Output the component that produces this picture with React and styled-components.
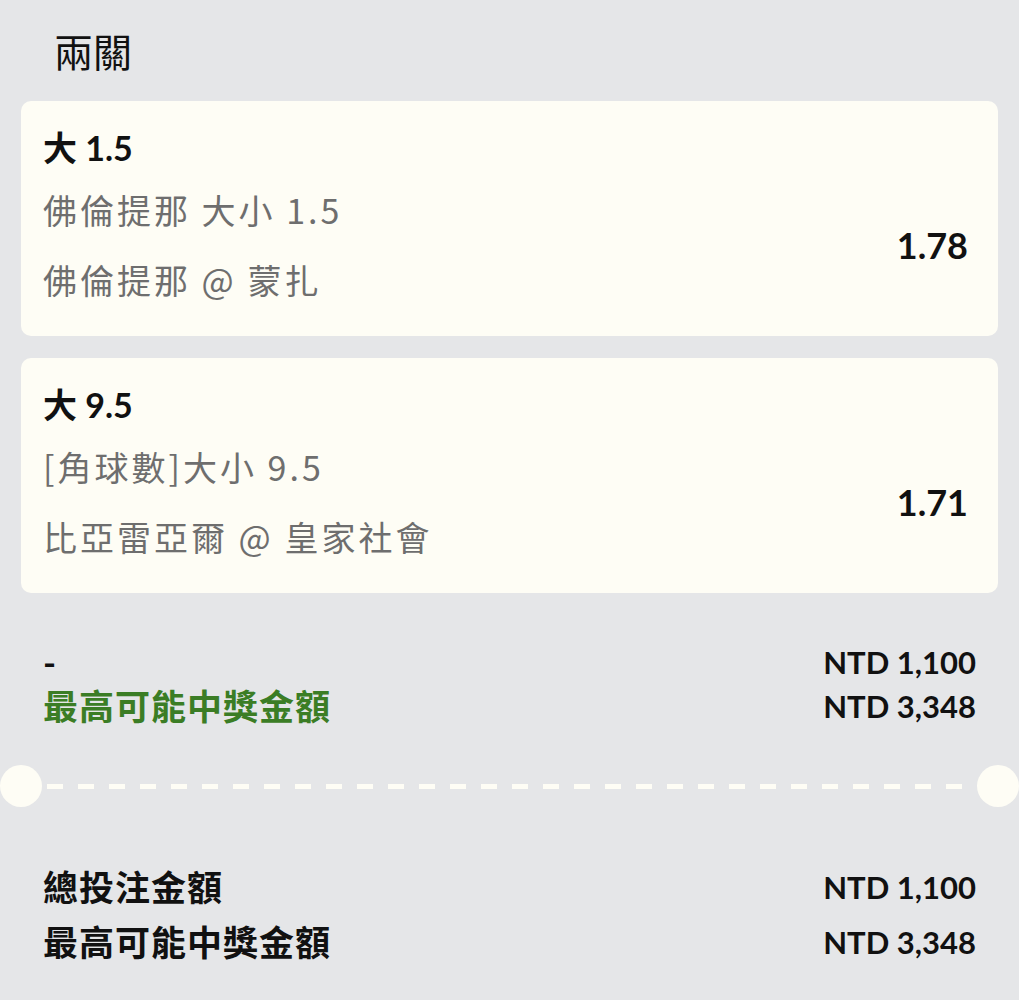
import React from 'react';
import styled, { createGlobalStyle } from 'styled-components';

const legs = [
  {
    id: 1,
    pick: '大 1.5',
    market: '佛倫提那 大小 1.5',
    match: '佛倫提那 @ 蒙扎',
    odds: '1.78',
  },
  {
    id: 2,
    pick: '大 9.5',
    market: '[角球數]大小 9.5',
    match: '比亞雷亞爾 @ 皇家社會',
    odds: '1.71',
  },
];

export default function App() {
  return (
    <>
      <GlobalStyle />
      <Page>
        <Title>兩關</Title>
        <LegList>
          {legs.map((leg) => (
            <LegCard key={leg.id}>
              <Pick>{leg.pick}</Pick>
              <LegBody>
                <div>
                  <Detail>{leg.market}</Detail>
                  <Detail>{leg.match}</Detail>
                </div>
                <Odds>{leg.odds}</Odds>
              </LegBody>
            </LegCard>
          ))}
        </LegList>

        <Summary>
          <SummaryRow>
            <Label>-</Label>
            <Amount>NTD 1,100</Amount>
          </SummaryRow>
          <SummaryRow>
            <Label $green>最高可能中獎金額</Label>
            <Amount>NTD 3,348</Amount>
          </SummaryRow>
        </Summary>

        <Divider>
          <Notch />
          <Dashes />
          <Notch />
        </Divider>

        <Totals>
          <TotalRow>
            <Label>總投注金額</Label>
            <Amount>NTD 1,100</Amount>
          </TotalRow>
          <TotalRow>
            <Label>最高可能中獎金額</Label>
            <Amount>NTD 3,348</Amount>
          </TotalRow>
        </Totals>
      </Page>
    </>
  );
}

const GlobalStyle = createGlobalStyle`
  body {
    margin: 0;
    background: #e5e6e8;
    font-family: Lato, "Noto Sans CJK TC", sans-serif;
    color: #111;
  }
`;

const Page = styled.div`
  min-height: 1000px;
  padding: 20px 21px 0;
  box-sizing: border-box;
`;

const Title = styled.h1`
  margin: 0 0 21px;
  padding-left: 33px;
  font-family: "Noto Sans CJK TC", sans-serif;
  font-size: 39px;
  font-weight: 400;
  line-height: 60px;
`;

const LegList = styled.div`
  display: flex;
  flex-direction: column;
  gap: 22px;
`;

const LegCard = styled.div`
  background: #fefdf5;
  border-radius: 10px;
  padding: 25px 30px 21px 22px;
  height: 235px;
  box-sizing: border-box;
`;

const Pick = styled.div`
  font-size: 34px;
  font-weight: 700;
  line-height: 44px;
  margin-bottom: 5px;
`;

const LegBody = styled.div`
  display: flex;
  justify-content: space-between;
  align-items: center;
`;

const Detail = styled.div`
  font-family: "Noto Sans CJK TC", sans-serif;
  font-size: 34px;
  line-height: 70px;
  letter-spacing: 3px;
  color: #6e6e6e;
`;

const Odds = styled.div`
  font-size: 36px;
  font-weight: 700;
`;

const Summary = styled.div`
  margin: 47px 22px 0;
`;

const SummaryRow = styled.div`
  display: flex;
  justify-content: space-between;
  align-items: center;
  line-height: 44px;
`;

const Label = styled.span`
  font-size: 35px;
  font-weight: 700;
  letter-spacing: 1px;
  color: ${(p) => (p.$green ? '#3b7d25' : '#111')};
`;

const Amount = styled.span`
  font-size: 31px;
  font-weight: 700;
`;

const Divider = styled.div`
  display: flex;
  align-items: center;
  margin: 37px -21px 0;
`;

const Notch = styled.div`
  width: 42px;
  height: 42px;
  border-radius: 50%;
  background: #fefdf5;
  flex-shrink: 0;
`;

const Dashes = styled.div`
  flex: 1;
  height: 5px;
  margin: 0 5px;
  background: repeating-linear-gradient(
    to right,
    #fefdf5 0 16px,
    transparent 16px 31px
  );
`;

const Totals = styled.div`
  margin: 53px 22px 0;
`;

const TotalRow = styled(SummaryRow)`
  line-height: 55px;
`;
